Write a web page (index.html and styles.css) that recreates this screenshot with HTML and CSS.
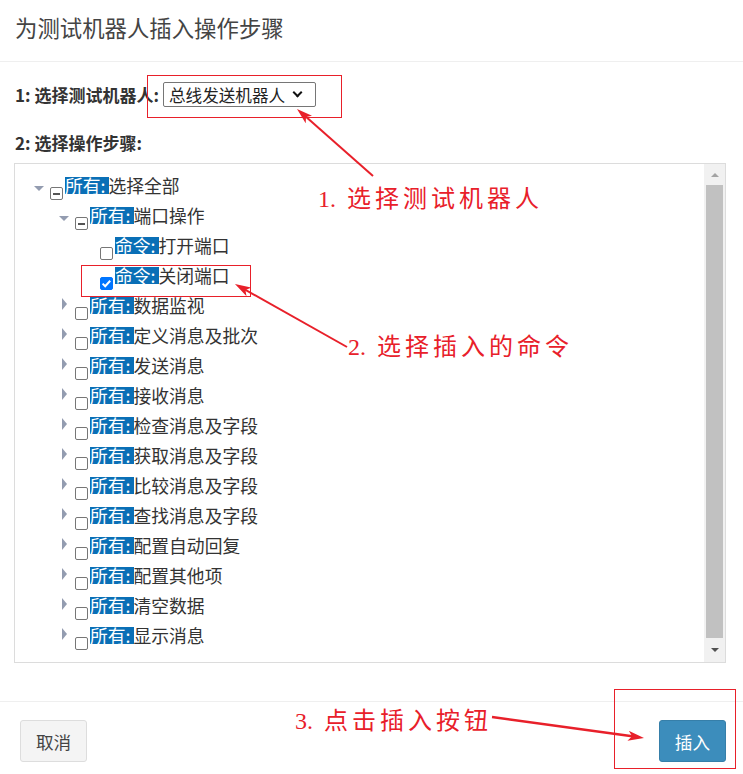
FILE: index.html
```html
<!DOCTYPE html>
<html lang="zh-CN">
<head>
  <meta charset="UTF-8">
  <meta name="viewport" content="width=device-width, initial-scale=1.0">
  <title>为测试机器人插入操作步骤</title>
  <link rel="stylesheet" href="styles.css">
</head>
<body>
  <div class="modal">
    <div class="modal-header">
      <h4 class="modal-title">为测试机器人插入操作步骤</h4>
    </div>

    <div class="modal-body">
      <div class="form-row">
        <label class="field-label robot-label" for="robot">1: 选择测试机器人:</label>
        <span class="select-wrap">
          <select id="robot" class="robot-select">
            <option selected>总线发送机器人</option>
          </select>
        </span>
      </div>

      <div class="field-label step-label">2: 选择操作步骤:</div>

      <div class="tree-box">
        <ul class="tree">
          <li class="node lv0">
            <span class="toggle open"></span>
            <span class="check part"></span>
            <span class="text"><span class="tag">所有:</span>选择全部</span>
          </li>
          <li class="node lv1">
            <span class="toggle open"></span>
            <span class="check part"></span>
            <span class="text"><span class="tag">所有:</span>端口操作</span>
          </li>
          <li class="node lv2">
            <span class="toggle"></span>
            <span class="check"></span>
            <span class="text"><span class="tag">命令:</span>打开端口</span>
          </li>
          <li class="node lv2">
            <span class="toggle"></span>
            <span class="check on">
              <svg viewBox="0 0 13 13" width="13" height="13"><path d="M2.6 6.6l2.6 2.6 5-5.4" fill="none" stroke="#fff" stroke-width="2"/></svg>
            </span>
            <span class="text"><span class="tag">命令:</span>关闭端口</span>
          </li>
          <li class="node lv1">
            <span class="toggle closed"></span>
            <span class="check"></span>
            <span class="text"><span class="tag">所有:</span>数据监视</span>
          </li>
          <li class="node lv1">
            <span class="toggle closed"></span>
            <span class="check"></span>
            <span class="text"><span class="tag">所有:</span>定义消息及批次</span>
          </li>
          <li class="node lv1">
            <span class="toggle closed"></span>
            <span class="check"></span>
            <span class="text"><span class="tag">所有:</span>发送消息</span>
          </li>
          <li class="node lv1">
            <span class="toggle closed"></span>
            <span class="check"></span>
            <span class="text"><span class="tag">所有:</span>接收消息</span>
          </li>
          <li class="node lv1">
            <span class="toggle closed"></span>
            <span class="check"></span>
            <span class="text"><span class="tag">所有:</span>检查消息及字段</span>
          </li>
          <li class="node lv1">
            <span class="toggle closed"></span>
            <span class="check"></span>
            <span class="text"><span class="tag">所有:</span>获取消息及字段</span>
          </li>
          <li class="node lv1">
            <span class="toggle closed"></span>
            <span class="check"></span>
            <span class="text"><span class="tag">所有:</span>比较消息及字段</span>
          </li>
          <li class="node lv1">
            <span class="toggle closed"></span>
            <span class="check"></span>
            <span class="text"><span class="tag">所有:</span>查找消息及字段</span>
          </li>
          <li class="node lv1">
            <span class="toggle closed"></span>
            <span class="check"></span>
            <span class="text"><span class="tag">所有:</span>配置自动回复</span>
          </li>
          <li class="node lv1">
            <span class="toggle closed"></span>
            <span class="check"></span>
            <span class="text"><span class="tag">所有:</span>配置其他项</span>
          </li>
          <li class="node lv1">
            <span class="toggle closed"></span>
            <span class="check"></span>
            <span class="text"><span class="tag">所有:</span>清空数据</span>
          </li>
          <li class="node lv1">
            <span class="toggle closed"></span>
            <span class="check"></span>
            <span class="text"><span class="tag">所有:</span>显示消息</span>
          </li>
        </ul>

        <div class="scrollbar">
          <span class="sb-btn up"></span>
          <span class="sb-thumb"></span>
          <span class="sb-btn down"></span>
        </div>
      </div>
    </div>

    <div class="modal-footer">
      <button class="btn btn-default">取消</button>
      <button class="btn btn-primary">插入</button>
    </div>
  </div>

  <!-- red annotations drawn over the screenshot -->
  <div class="annotations">
    <svg class="marks" width="743" height="774" viewBox="0 0 743 774">
      <defs>
        <marker id="head" markerUnits="userSpaceOnUse" markerWidth="16" markerHeight="10" refX="6" refY="5" orient="auto">
          <path d="M0,0 L16,5 L0,10 L4,5 z" fill="#e8202a"/>
        </marker>
      </defs>
      <rect x="147.5" y="75.5" width="194" height="42" fill="none" stroke="#e8202a"/>
      <rect x="81.5" y="265.5" width="169" height="31" fill="none" stroke="#e8202a"/>
      <rect x="614.5" y="689.5" width="121" height="79" fill="none" stroke="#e8202a"/>
      <line x1="373" y1="176" x2="304.5" y2="115.6" stroke="#e8202a" stroke-width="2" marker-end="url(#head)"/>
      <line x1="347" y1="347" x2="243.7" y2="288.9" stroke="#e8202a" stroke-width="2" marker-end="url(#head)"/>
      <line x1="492" y1="717" x2="634.1" y2="736.6" stroke="#e8202a" stroke-width="2.5" marker-end="url(#head)"/>
    </svg>
    <div class="note note-1"><span class="num">1.</span><span class="cjk">选择测试机器人</span></div>
    <div class="note note-2"><span class="num">2.</span><span class="cjk">选择插入的命令</span></div>
    <div class="note note-3"><span class="num">3.</span><span class="cjk">点击插入按钮</span></div>
  </div>
</body>
</html>
```

FILE: styles.css
```css
body {
  margin: 0;
  font-family: "Noto Sans CJK SC", "Noto Sans", sans-serif;
  color: #333;
  background: #fff;
  position: relative;
  width: 743px;
  height: 774px;
  overflow: hidden;
}
.modal {
  width: 743px;
}
.modal-header {
  padding: 12px 15px 18px;
  border-bottom: 1px solid #efefef;
}
.modal-title {
  margin: 0;
  font-size: 22.4px;
  line-height: 31px;
  font-weight: 400;
  color: #444;
}
.modal-body {
  padding: 20px 17px 38px 14px;
}
.form-row {
  display: flex;
  align-items: center;
  height: 25px;
}
.field-label {
  font-size: 17px;
  font-weight: 700;
  color: #333;
}
.robot-label {
  width: 149px;
  padding-left: 1px;
  box-sizing: border-box;
  white-space: nowrap;
}
.select-wrap {
  position: relative;
  display: flex;
}
.select-wrap::after {
  content: "";
  position: absolute;
  right: 15px;
  top: 7px;
  width: 5px;
  height: 5px;
  border-right: 2px solid #111;
  border-bottom: 2px solid #111;
  transform: rotate(45deg);
  pointer-events: none;
}
.robot-select {
  appearance: none;
  width: 153px;
  height: 25px;
  padding: 0 0 0 5px;
  font-family: "Noto Sans CJK SC", sans-serif;
  font-size: 16.6px;
  color: #222;
  border: 1px solid #767676;
  border-radius: 2px;
  background: #fff;
}
.step-label {
  margin-top: 25px;
  margin-bottom: 9px;
  line-height: 22px;
  padding-left: 1px;
}
.tree-box {
  display: flex;
  height: 500px;
  box-sizing: border-box;
  border: 1px solid #dcdcdc;
}
.tree {
  flex: 1;
  margin: 0;
  padding: 8px 0 0 17px;
  list-style: none;
  overflow: hidden;
}
.node {
  display: flex;
  align-items: flex-start;
  height: 30px;
}
.lv1 { padding-left: 25px; }
.lv2 { padding-left: 50px; }
.toggle {
  display: flex;
  width: 16px;
  height: 30px;
  flex: none;
}
.toggle.open::after {
  content: "";
  margin: 14px 0 0 2px;
  border-left: 5px solid transparent;
  border-right: 5px solid transparent;
  border-top: 5px solid #939cb0;
  height: 0;
}
.toggle.closed::after {
  content: "";
  margin: 6px 0 0 5px;
  border-top: 6px solid transparent;
  border-bottom: 6px solid transparent;
  border-left: 5px solid #939cb0;
  height: 0;
}
.check {
  position: relative;
  flex: none;
  width: 13px;
  height: 13px;
  margin: 15px 0 0 2px;
  box-sizing: border-box;
  border: 1px solid #767676;
  border-radius: 2px;
  background: #fff;
}
.check.part::after {
  content: "";
  position: absolute;
  left: 2px;
  right: 2px;
  top: 4.5px;
  height: 2px;
  background: #555;
}
.check.on {
  border-color: #0075ff;
  background: #0075ff;
}
.check.on svg {
  position: absolute;
  left: -1px;
  top: -1px;
}
.text {
  margin: 5px 0 0 2px;
  font-size: 17.8px;
  line-height: 17px;
  color: #333;
  white-space: nowrap;
}
.tag {
  display: inline-block;
  height: 17px;
  padding-right: 3px;
  background: #0a6fb6;
  color: #fff;
}
.scrollbar {
  display: flex;
  flex-direction: column;
  width: 21px;
  background: #f1f1f1;
}
.sb-btn {
  display: flex;
  justify-content: center;
  flex: none;
}
.sb-btn.up {
  height: 21px;
}
.sb-btn.up::after {
  content: "";
  margin-top: 9px;
  border-left: 4px solid transparent;
  border-right: 4px solid transparent;
  border-bottom: 4px solid #a3a3a3;
  height: 0;
}
.sb-thumb {
  flex: 1;
  margin: 0 2px;
  background: #c1c1c1;
}
.sb-btn.down {
  height: 24px;
}
.sb-btn.down::after {
  content: "";
  margin-top: 10px;
  border-left: 4px solid transparent;
  border-right: 4px solid transparent;
  border-top: 4px solid #505050;
  height: 0;
}
.modal-footer {
  display: flex;
  justify-content: space-between;
  padding: 18px 17px 12px 20px;
  border-top: 1px solid #efefef;
}
.btn {
  height: 42px;
  padding: 0 15px;
  font-family: "Noto Sans CJK SC", sans-serif;
  font-size: 17.6px;
  border: 1px solid;
  border-radius: 3px;
  cursor: pointer;
}
.btn-default {
  background: #f4f4f4;
  border-color: #ddd;
  color: #444;
}
.btn-primary {
  background: #3c8dbc;
  border-color: #367fa9;
  color: #fff;
}
.annotations {
  position: absolute;
  top: 0;
  left: 0;
  width: 743px;
  height: 774px;
  pointer-events: none;
}
.marks {
  position: absolute;
  top: 0;
  left: 0;
}
.note {
  position: absolute;
  font-size: 24px;
  line-height: 24px;
  color: #e8202a;
  white-space: nowrap;
}
.note .num {
  font-family: "Liberation Serif", serif;
}
.note .cjk {
  margin-left: 11px;
  letter-spacing: 4px;
}
.note-1 { left: 318px; top: 185px; }
.note-2 { left: 348px; top: 333px; }
.note-3 { left: 295px; top: 707px; }
```
